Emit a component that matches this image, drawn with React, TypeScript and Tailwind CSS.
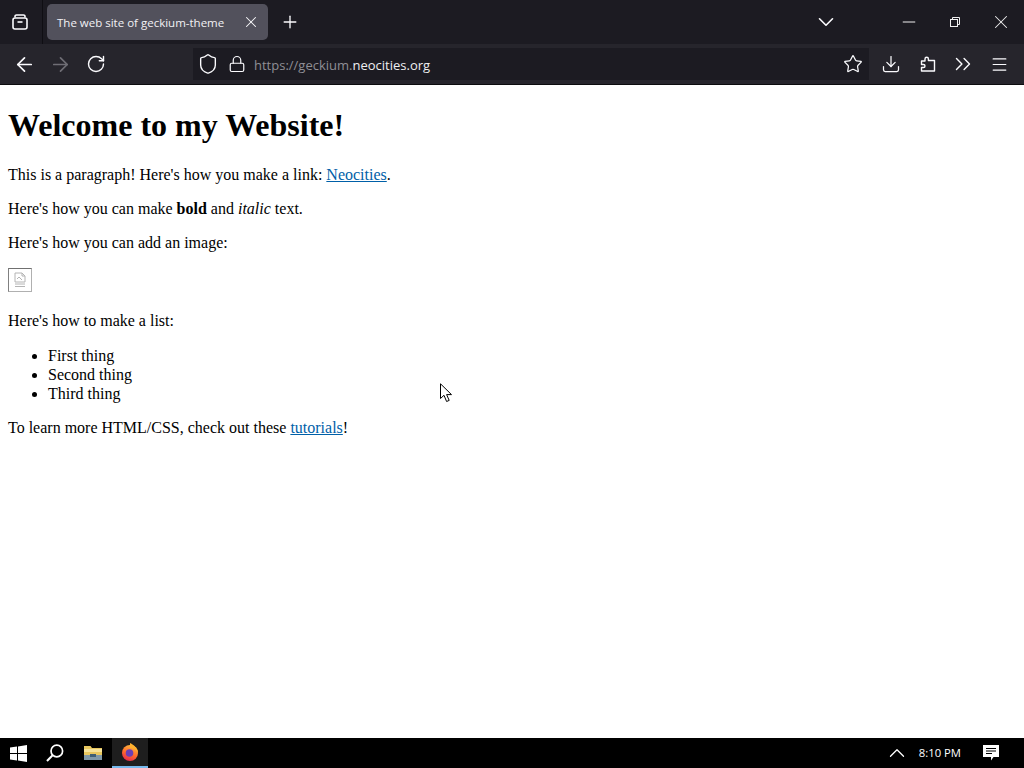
import { ArrowLeft, ArrowRight, ChevronDown, ChevronUp, ChevronsRight, Download, Lock, Menu, Minus, Plus, RotateCw, Shield, Star, X } from "lucide-react";

function FirefoxView() {
  return (
    <svg width="18" height="18" viewBox="0 0 18 18" fill="none" stroke="#fbfbfe" strokeWidth="1.6">
      <path d="M4 4.5 V3.5 A1.5 1.5 0 0 1 5.5 2 H12.5 A1.5 1.5 0 0 1 14 3.5 V4.5" />
      <rect x="2" y="5" width="14" height="11" rx="2" />
      <path d="M6.5 9 H11.5" />
    </svg>
  );
}

function Restore() {
  return (
    <svg width="10" height="10" viewBox="0 0 10 10" fill="none" stroke="#f0f0f0" strokeWidth="1">
      <rect x="0.5" y="2.5" width="7" height="7" />
      <path d="M2.5 2.5 V0.5 H9.5 V7.5 H7.5" />
    </svg>
  );
}

function Puzzle() {
  return (
    <svg width="16" height="16" viewBox="0 0 16 16" fill="none" stroke="#fbfbfe" strokeWidth="1.4" strokeLinejoin="round">
      <path d="M1.5 5 H5 V3 A1.7 1.7 0 0 1 8.4 3 V4.5 H14.5 V15 H1.5 V11.5 H3.5 A1.5 1.5 0 0 0 3.5 8.5 H1.5 Z" />
    </svg>
  );
}

function WindowsLogo() {
  return (
    <svg width="17" height="17" viewBox="0 0 17 17" fill="#ffffff">
      <path d="M0 2.6 L7 1.6 V8 H0 Z" />
      <path d="M8 1.4 L17 0 V8 H8 Z" />
      <path d="M0 9 H7 V15.4 L0 14.4 Z" />
      <path d="M8 9 H17 V17 L8 15.6 Z" />
    </svg>
  );
}

function SearchGlass() {
  return (
    <svg width="18" height="18" viewBox="0 0 18 18" fill="none" stroke="#ffffff" strokeWidth="1.7">
      <circle cx="10.8" cy="7" r="5.8" />
      <path d="M6.6 11.2 L1 17" strokeWidth="2" />
    </svg>
  );
}

function FolderIcon() {
  return (
    <svg width="18" height="16" viewBox="0 0 18 16">
      <path d="M0 1 H6.5 L8 3 H18 V15 H0 Z" fill="#e8c75f" />
      <rect x="0" y="4" width="18" height="3" fill="#f6e39a" />
      <rect x="0" y="10" width="18" height="5" fill="#7f98a8" />
      <rect x="6" y="9" width="6" height="3" fill="#3f5f74" />
    </svg>
  );
}

function FirefoxIcon() {
  return (
    <svg width="18" height="18" viewBox="0 0 18 18">
      <defs>
        <linearGradient id="fx" x1="0.7" y1="0" x2="0.3" y2="1">
          <stop offset="0" stopColor="#ffbd3f" />
          <stop offset="0.55" stopColor="#ff6a2b" />
          <stop offset="1" stopColor="#e5264f" />
        </linearGradient>
      </defs>
      <circle cx="9" cy="10" r="8" fill="url(#fx)" />
      <circle cx="8.5" cy="10" r="3.8" fill="#6b3fb5" />
      <path d="M9 0 C13 2 17 5 17 10 C15 6 12 5 9 5 Z" fill="#ffb12e" />
    </svg>
  );
}

function Notifications() {
  return (
    <svg width="16" height="16" viewBox="0 0 16 16">
      <path d="M0 0 H16 V12 H10.5 L8 15.5 V12 H0 Z" fill="#ffffff" />
      <path d="M3 3.5 H13 M3 6 H13 M3 8.5 H9" stroke="#000000" strokeWidth="1" />
    </svg>
  );
}

function BrokenImage() {
  return (
    <span className="inline-block w-6 h-6 overflow-hidden border border-[#b0b0b0] border-t-[#707070] border-l-[#808080] pt-[3px] pl-[5px]">
      <svg className="block" width="12" height="16" viewBox="0 0 12 16" fill="none" stroke="#b4b4b4" strokeWidth="1">
        <path d="M1 1 H8 L11 4 V10 H1 Z" />
        <path d="M8 1 V4 H11 M3 7 L5 5 L8 8" />
        <path d="M1 12 H11 M1 14.5 H11" />
      </svg>
    </span>
  );
}

function Cursor() {
  return (
    <svg className="absolute left-[440px] top-[383px]" width="13" height="20" viewBox="0 0 13 20" fill="#ffffff" stroke="#000000" strokeWidth="1">
      <path d="M0.5 0.8 V15.5 L4 12.3 L6.6 18.5 L9.2 17.4 L6.6 11.6 H11.5 Z" />
    </svg>
  );
}

export default function App() {
  return (
    <div className="relative flex flex-col w-[1024px] h-[768px] overflow-hidden bg-white font-['Open_Sans',sans-serif]">
      {/* tab strip */}
      <div className="flex items-center h-[44px] bg-[#1c1b22] shrink-0">
        <div className="flex items-center justify-center w-[43px] h-full border-r border-[#0f0e13] pr-[3px]">
          <FirefoxView />
        </div>
        <div className="flex items-center justify-between w-[221px] h-9 ml-[4px] pl-[10px] pr-[8px] rounded-[5px] bg-[#52515c]">
          <span className="pt-px text-[11.5px] text-[#f2f2f5] whitespace-nowrap">The web site of geckium-theme</span>
          <X size={18} color="#fbfbfe" strokeWidth={1.4} />
        </div>
        <div className="ml-[12px]">
          <Plus size={20} color="#fbfbfe" strokeWidth={1.6} />
        </div>
        <div className="flex-1" />
        <ChevronDown size={26} color="#fbfbfe" strokeWidth={1.5} />
        <div className="flex items-center justify-center w-[46px] ml-[47px]">
          <Minus size={20} color="#f0f0f0" strokeWidth={1.2} />
        </div>
        <div className="flex items-center justify-center w-[46px]">
          <Restore />
        </div>
        <div className="flex items-center justify-center w-[46px]">
          <X size={22} color="#f0f0f0" strokeWidth={1.1} />
        </div>
      </div>

      {/* toolbar */}
      <div className="flex items-center h-[41px] bg-[#26252c] border-b border-[#0c0c0f] shrink-0">
        <div className="flex items-center justify-center w-12">
          <ArrowLeft size={23} color="#fbfbfe" strokeWidth={1.8} />
        </div>
        <div className="flex items-center justify-center w-6">
          <ArrowRight size={23} color="#6f6e75" strokeWidth={1.8} />
        </div>
        <div className="flex items-center justify-center w-12">
          <RotateCw size={20} color="#fbfbfe" strokeWidth={1.7} />
        </div>
        <div className="flex items-center w-[676px] h-8 ml-[73px] bg-[#1c1b22]">
          <div className="flex items-center justify-center w-6 ml-[3px]">
            <Shield size={22} color="#fbfbfe" strokeWidth={1.5} />
          </div>
          <div className="flex items-center justify-center w-5 ml-[7px]">
            <Lock size={18} color="#fbfbfe" strokeWidth={1.6} />
          </div>
          <span className="ml-[7px] pt-[3px] text-[13px] text-[#8f8e95] whitespace-nowrap">
            https://geckium.<span className="text-[#eeeef0]">neocities.org</span>
          </span>
          <div className="flex-1" />
          <div className="mr-[6px]">
            <Star size={20} color="#fbfbfe" strokeWidth={1.5} />
          </div>
        </div>
        <div className="flex items-center flex-1 pl-[4px]">
          <div className="flex items-center justify-center w-9">
            <Download size={20} color="#fbfbfe" strokeWidth={1.5} />
          </div>
          <div className="flex items-center justify-center w-9 pl-[2px]">
            <Puzzle />
          </div>
          <div className="flex items-center justify-center w-9">
            <ChevronsRight size={26} color="#fbfbfe" strokeWidth={1.3} />
          </div>
          <div className="flex items-center justify-center w-9">
            <Menu size={19} color="#fbfbfe" strokeWidth={1.5} />
          </div>
        </div>
      </div>

      {/* page */}
      <div className="flex-1 px-2 pt-px text-[16px] leading-[18.2px] text-black font-['Liberation_Serif',serif]">
        <h1 className="my-[21.44px] text-[32px] font-bold leading-[normal]">Welcome to my Website!</h1>
        <p className="my-4">
          This is a paragraph! Here's how you make a link: <a className="text-[#0060a8] underline">Neocities</a>.
        </p>
        <p className="my-4">
          Here's how you can make <strong className="font-bold">bold</strong> and <em className="italic">italic</em> text.
        </p>
        <p className="my-4">Here's how you can add an image:</p>
        <p className="mt-4 mb-[15px]">
          <BrokenImage />
        </p>
        <p className="mt-[15px] mb-4">Here's how to make a list:</p>
        <ul className="my-4 pl-10 list-disc leading-[19px]">
          <li>First thing</li>
          <li>Second thing</li>
          <li>Third thing</li>
        </ul>
        <p className="my-4">
          To learn more HTML/CSS, check out these <a className="text-[#0060a8] underline">tutorials</a>!
        </p>
      </div>

      {/* taskbar */}
      <div className="flex items-center h-[30px] bg-black shrink-0">
        <div className="flex items-center justify-center w-[37px] h-full">
          <WindowsLogo />
        </div>
        <div className="flex items-center justify-center w-[36px] h-full">
          <SearchGlass />
        </div>
        <div className="flex items-center justify-center w-[39px] h-full">
          <FolderIcon />
        </div>
        <div className="flex items-center justify-center w-9 h-full bg-[#1e1e1e] border-b-2 border-[#76b9ed]">
          <FirefoxIcon />
        </div>
        <div className="flex-1" />
        <ChevronUp size={26} color="#ffffff" strokeWidth={1.2} />
        <span className="ml-[9px] text-[11.3px] text-white">8:10 PM</span>
        <div className="ml-[22px] mr-[25px]">
          <Notifications />
        </div>
      </div>

      <Cursor />
    </div>
  );
}
